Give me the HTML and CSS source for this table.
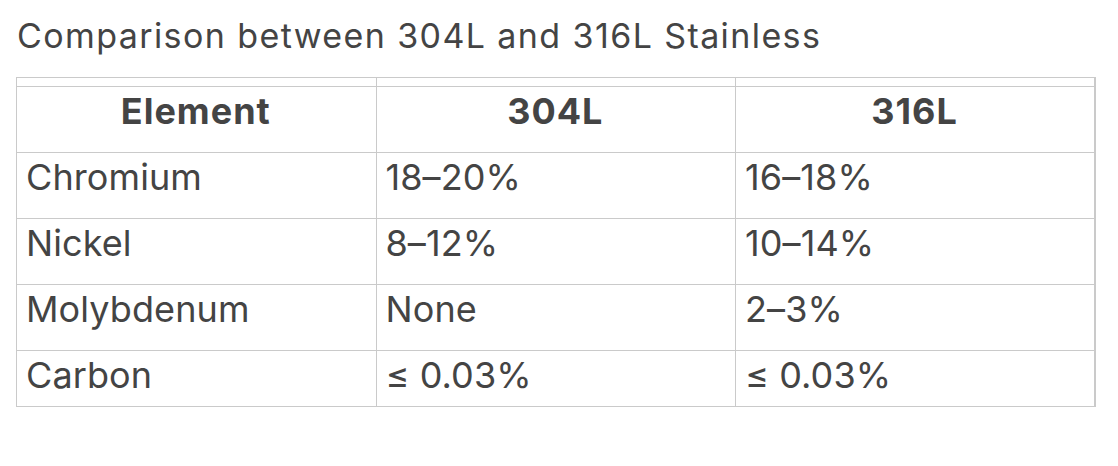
FILE: index.html
```html
<!DOCTYPE html>
<html>
<head>
<meta charset="utf-8">
<link rel="stylesheet" href="styles.css">
</head>
<body>
<div class="wrap">
  <div class="title">Comparison between 304L and 316L Stainless</div>
  <table class="cmp">
    <tr class="spacer"><td></td><td></td><td></td></tr>
    <tr class="head"><th>Element</th><th>304L</th><th>316L</th></tr>
    <tr><td>Chromium</td><td>18–20%</td><td>16–18%</td></tr>
    <tr><td>Nickel</td><td>8–12%</td><td>10–14%</td></tr>
    <tr><td>Molybdenum</td><td>None</td><td>2–3%</td></tr>
    <tr class="last"><td>Carbon</td><td>≤ 0.03%</td><td>≤ 0.03%</td></tr>
  </table>
</div>
</body>
</html>
```

FILE: styles.css
```css
html, body {
  margin: 0;
  padding: 0;
  background: #ffffff;
}
.wrap {
  padding: 13px 0 0 16px;
  font-family: Inter, "Noto Sans", sans-serif;
  color: #444444;
}
.title {
  font-size: 34px;
  line-height: 46px;
  padding-left: 1px;
  letter-spacing: 1.4px;
  margin-bottom: 18px;
}
.cmp {
  border-collapse: collapse;
  width: 1080px;
  table-layout: fixed;
  font-size: 36px;
  line-height: 44px;
}
.cmp td, .cmp th {
  border: 1px solid #cacaca;
  padding: 2px 10px 0 9px;
  height: 66px;
  text-align: left;
  font-weight: 400;
  letter-spacing: 0.1px;
  vertical-align: top;
  box-sizing: border-box;
}
.cmp .spacer td {
  height: 9px;
  padding: 0;
}
.cmp .head th {
  text-align: center;
  font-weight: 700;
  letter-spacing: 1px;
}
.cmp .last td {
  height: 56px;
}
.cmp td:last-child, .cmp th:last-child {
  border-right-width: 2px;
}
```
